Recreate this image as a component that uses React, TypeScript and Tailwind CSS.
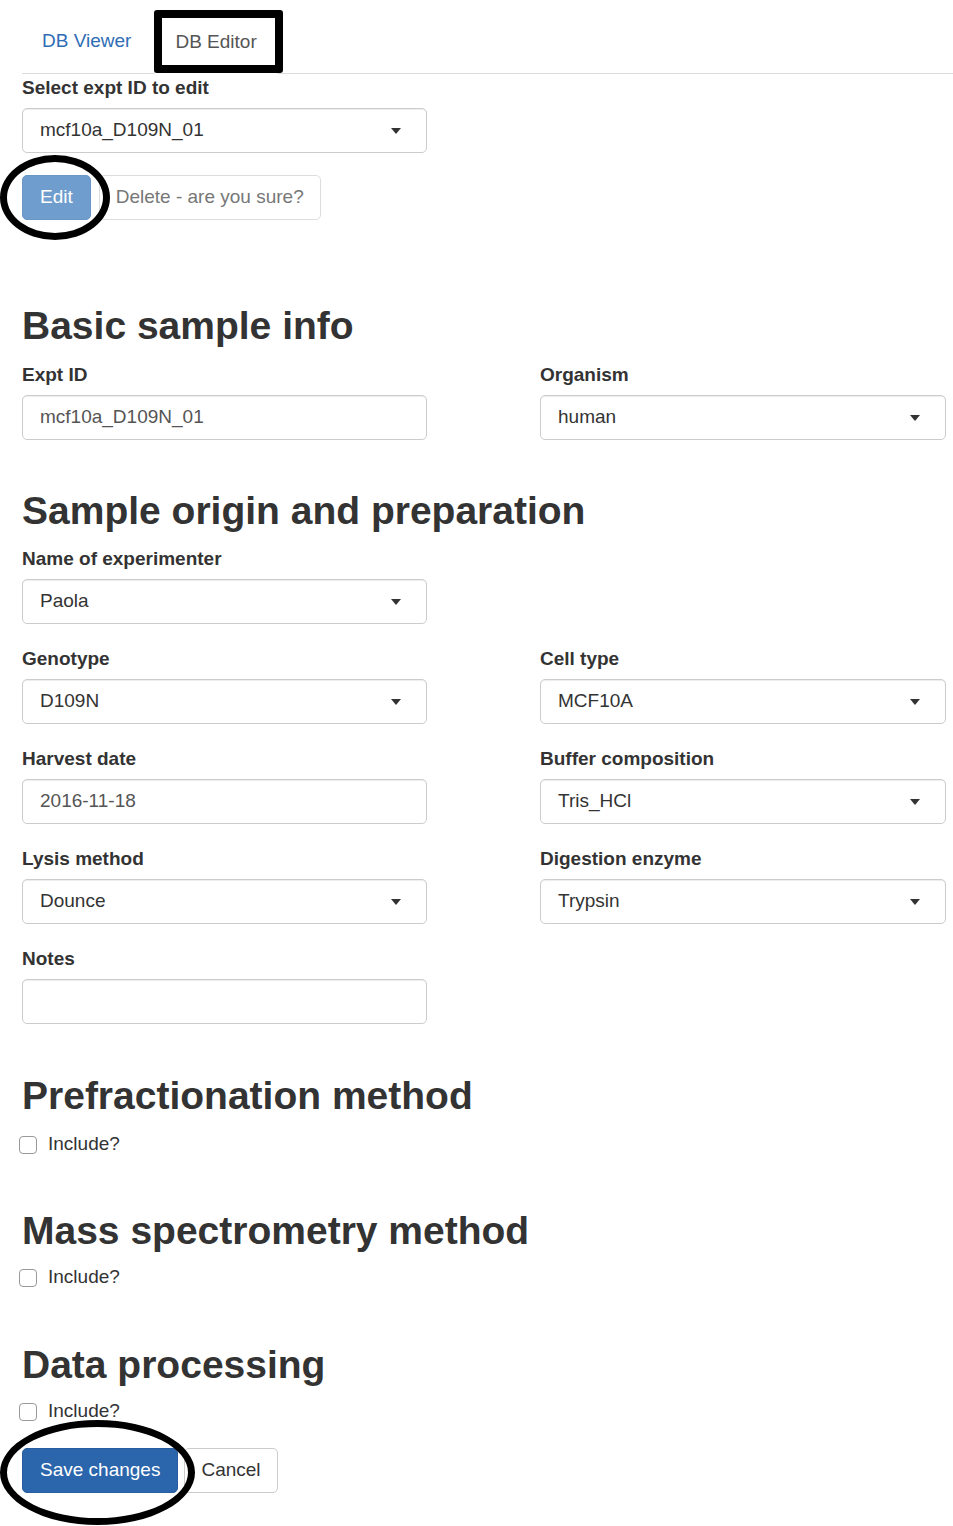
import type { ReactNode } from "react"

const font = { fontFamily: '"Liberation Sans", Arial, sans-serif' }

function Label({ children }: { children: ReactNode }) {
  return <div className="text-[19px] font-bold leading-[27px] text-[#333] mb-[7px]">{children}</div>
}

function Select({ value, wide }: { value: string; wide?: boolean }) {
  return (
    <div
      className={`${wide ? "w-[406px]" : "w-[405px]"} h-[45px] border border-[#ccc] rounded-[5px] bg-white flex items-center justify-between pl-[17px] pr-[25px] text-[19px] text-[#333] shadow-[inset_0_1px_1px_rgba(0,0,0,0.075)]`}
    >
      <span>{value}</span>
      <span className="w-0 h-0 border-x-[5px] border-x-transparent border-t-[6px] border-t-[#333]" />
    </div>
  )
}

function TextInput({ value }: { value: string }) {
  return (
    <div className="w-[405px] h-[45px] border border-[#ccc] rounded-[5px] bg-white flex items-center pl-[17px] text-[19px] text-[#555] shadow-[inset_0_1px_1px_rgba(0,0,0,0.075)]">
      {value}
    </div>
  )
}

function Heading({ children, className }: { children: ReactNode; className: string }) {
  return <h3 className={`text-[39px] font-bold leading-[44px] text-[#333] ${className}`}>{children}</h3>
}

function Include({ className }: { className: string }) {
  return (
    <label className={`flex items-center h-[27px] -ml-[3px] gap-[11px] text-[19px] text-[#333] ${className}`}>
      <span className="w-[18px] h-[18px] border border-[#999] rounded-[4px] bg-white" />
      Include?
    </label>
  )
}

export default function App() {
  return (
    <div className="relative min-h-[1526px] bg-white pl-[22px]" style={font}>
      {/* tabs */}
      <ul className="flex pt-[14px] border-b border-[#ddd] text-[19px] leading-[27px]">
        <li className="mr-[3px]">
          <a className="block px-[20px] pt-[13px] pb-[18px] text-[#2f6db5]">DB Viewer</a>
        </li>
        <li>
          <a className="block px-[20px] pt-[13px] pb-[18px] -mb-px border border-[#ddd] border-b-white rounded-t-[5px] bg-white text-[#555]">
            DB Editor
          </a>
        </li>
      </ul>

      <div>
        <Label>Select expt ID to edit</Label>
        <Select value="mcf10a_D109N_01" />
      </div>

      <div className="mt-[22px] flex gap-[8px] text-[19px]">
        <button className="h-[45px] px-[17px] rounded-[5px] bg-[#6f9dcd] border border-[#6a97c6] text-white">Edit</button>
        <button className="h-[45px] px-[16px] rounded-[5px] bg-white border border-[#ddd] text-[#777]">
          Delete - are you sure?
        </button>
      </div>

      <Heading className="mt-[84px]">Basic sample info</Heading>
      <div className="mt-[13px] grid grid-cols-[518px_1fr]">
        <div>
          <Label>Expt ID</Label>
          <TextInput value="mcf10a_D109N_01" />
        </div>
        <div>
          <Label>Organism</Label>
          <Select value="human" wide />
        </div>
      </div>

      <Heading className="mt-[49px]">Sample origin and preparation</Heading>
      <div className="mt-[12px]">
        <Label>Name of experimenter</Label>
        <Select value="Paola" />
      </div>
      <div className="mt-[21px] grid grid-cols-[518px_1fr]">
        <div>
          <Label>Genotype</Label>
          <Select value="D109N" />
        </div>
        <div>
          <Label>Cell type</Label>
          <Select value="MCF10A" wide />
        </div>
      </div>
      <div className="mt-[21px] grid grid-cols-[518px_1fr]">
        <div>
          <Label>Harvest date</Label>
          <TextInput value="2016-11-18" />
        </div>
        <div>
          <Label>Buffer composition</Label>
          <Select value="Tris_HCl" wide />
        </div>
      </div>
      <div className="mt-[21px] grid grid-cols-[518px_1fr]">
        <div>
          <Label>Lysis method</Label>
          <Select value="Dounce" />
        </div>
        <div>
          <Label>Digestion enzyme</Label>
          <Select value="Trypsin" wide />
        </div>
      </div>
      <div className="mt-[21px]">
        <Label>Notes</Label>
        <TextInput value="" />
      </div>

      <Heading className="mt-[50px]">Prefractionation method</Heading>
      <Include className="mt-[13px]" />

      <Heading className="mt-[51px]">Mass spectrometry method</Heading>
      <Include className="mt-[11px]" />

      <Heading className="mt-[52px]">Data processing</Heading>
      <Include className="mt-[11px]" />

      <div className="mt-[23px] flex gap-[6px] text-[19px]">
        <button className="h-[45px] px-[17px] rounded-[5px] bg-[#2b65ab] border border-[#285e9f] text-white">Save changes</button>
        <button className="h-[45px] px-[16px] rounded-[5px] bg-white border border-[#ccc] text-[#333]">Cancel</button>
      </div>

      {/* annotations drawn over the screenshot */}
      <div className="absolute left-[154px] top-[10px] w-[129px] h-[63px] border-[8px] border-black rounded-[3px]" />
      <div className="absolute left-0 top-[155px] w-[110px] h-[85px] rounded-[50%] border-[7px] border-black" />
      <div className="absolute left-0 top-[1420px] w-[195px] h-[105px] rounded-[50%] border-[7px] border-black" />
    </div>
  )
}
